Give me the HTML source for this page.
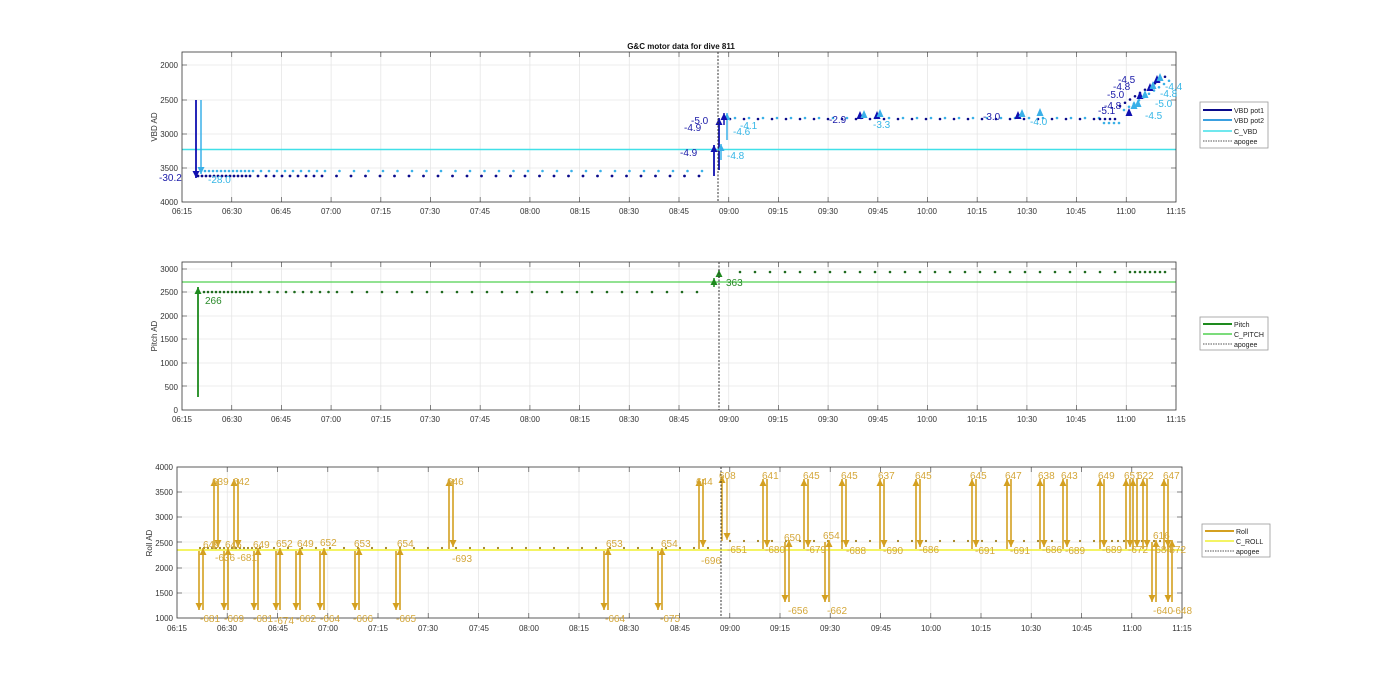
<!DOCTYPE html>
<html><head><meta charset="utf-8"><style>
html,body{margin:0;padding:0;background:#fff;width:1400px;height:693px;overflow:hidden}
svg{display:block;font-family:"Liberation Sans",Arial,sans-serif}
.t{font-size:8px;fill:#333}
</style></head><body>
<svg id="s" width="1400" height="693" viewBox="0 0 1400 693">
<g id="g"></g>
<text x="681" y="49" font-size="8" font-weight="bold" fill="#111" text-anchor="middle">G&amp;C motor data for dive 811</text>
<g class="t" text-anchor="end">
<text x="178" y="68">2000</text><text x="178" y="103">2500</text><text x="178" y="137">3000</text><text x="178" y="171">3500</text><text x="178" y="205">4000</text>
<text x="178" y="272">3000</text><text x="178" y="295">2500</text><text x="178" y="319">2000</text><text x="178" y="342">1500</text><text x="178" y="366">1000</text><text x="178" y="390">500</text><text x="178" y="413">0</text>
<text x="173" y="470">4000</text><text x="173" y="495">3500</text><text x="173" y="520">3000</text><text x="173" y="546">2500</text><text x="173" y="571">2000</text><text x="173" y="596">1500</text><text x="173" y="621">1000</text>
</g>
<g class="t" text-anchor="middle">
<text transform="translate(157,127) rotate(-90)">VBD AD</text>
<text transform="translate(157,336) rotate(-90)">Pitch AD</text>
<text transform="translate(152,543) rotate(-90)">Roll AD</text>
</g>
<g class="t" text-anchor="middle">
<text x="182" y="214">06:15</text><text x="232" y="214">06:30</text><text x="281" y="214">06:45</text><text x="331" y="214">07:00</text><text x="381" y="214">07:15</text><text x="430" y="214">07:30</text><text x="480" y="214">07:45</text><text x="530" y="214">08:00</text><text x="580" y="214">08:15</text><text x="629" y="214">08:30</text><text x="679" y="214">08:45</text><text x="729" y="214">09:00</text><text x="778" y="214">09:15</text><text x="828" y="214">09:30</text><text x="878" y="214">09:45</text><text x="927" y="214">10:00</text><text x="977" y="214">10:15</text><text x="1027" y="214">10:30</text><text x="1076" y="214">10:45</text><text x="1126" y="214">11:00</text><text x="1176" y="214">11:15</text>
</g>
<g class="t" text-anchor="middle">
<text x="182" y="422">06:15</text><text x="232" y="422">06:30</text><text x="281" y="422">06:45</text><text x="331" y="422">07:00</text><text x="381" y="422">07:15</text><text x="430" y="422">07:30</text><text x="480" y="422">07:45</text><text x="530" y="422">08:00</text><text x="580" y="422">08:15</text><text x="629" y="422">08:30</text><text x="679" y="422">08:45</text><text x="729" y="422">09:00</text><text x="778" y="422">09:15</text><text x="828" y="422">09:30</text><text x="878" y="422">09:45</text><text x="927" y="422">10:00</text><text x="977" y="422">10:15</text><text x="1027" y="422">10:30</text><text x="1076" y="422">10:45</text><text x="1126" y="422">11:00</text><text x="1176" y="422">11:15</text>
</g>
<g class="t" text-anchor="middle">
<text x="177" y="631">06:15</text><text x="227" y="631">06:30</text><text x="278" y="631">06:45</text><text x="328" y="631">07:00</text><text x="378" y="631">07:15</text><text x="428" y="631">07:30</text><text x="479" y="631">07:45</text><text x="529" y="631">08:00</text><text x="579" y="631">08:15</text><text x="629" y="631">08:30</text><text x="680" y="631">08:45</text><text x="730" y="631">09:00</text><text x="780" y="631">09:15</text><text x="830" y="631">09:30</text><text x="881" y="631">09:45</text><text x="931" y="631">10:00</text><text x="981" y="631">10:15</text><text x="1031" y="631">10:30</text><text x="1082" y="631">10:45</text><text x="1132" y="631">11:00</text><text x="1182" y="631">11:15</text>
</g>
<g font-size="10">
<text x="159" y="181" fill="#1a1aa8">-30.2</text><text x="208" y="183" fill="#35b6e6">-28.0</text>
<text x="691" y="124" fill="#1a1aa8">-5.0</text><text x="684" y="131" fill="#1a1aa8">-4.9</text><text x="680" y="156" fill="#1a1aa8">-4.9</text>
<text x="727" y="159" fill="#35b6e6">-4.8</text><text x="733" y="135" fill="#35b6e6">-4.6</text><text x="740" y="129" fill="#35b6e6">-4.1</text>
<text x="829" y="123" fill="#1a1aa8">-2.9</text><text x="873" y="128" fill="#35b6e6">-3.3</text><text x="983" y="120" fill="#1a1aa8">-3.0</text><text x="1030" y="125" fill="#35b6e6">-4.0</text>
<text x="1098" y="114" fill="#1a1aa8">-5.1</text><text x="1104" y="109" fill="#1a1aa8">-4.8</text><text x="1107" y="98" fill="#1a1aa8">-5.0</text><text x="1113" y="90" fill="#1a1aa8">-4.8</text><text x="1118" y="83" fill="#1a1aa8">-4.5</text>
<text x="1145" y="119" fill="#35b6e6">-4.5</text><text x="1155" y="107" fill="#35b6e6">-5.0</text><text x="1160" y="97" fill="#35b6e6">-4.8</text><text x="1165" y="90" fill="#35b6e6">-4.4</text>
</g>
<g font-size="10" fill="#2a8a2a"><text x="205" y="304">266</text><text x="726" y="286">363</text></g>
<g font-size="10" fill="#d4a73a" id="ra"></g>
<g font-size="7" fill="#222">
<rect x="1200" y="102" width="68" height="46" fill="#fff" stroke="#999" stroke-width="0.8"/>
<line x1="1203" y1="110" x2="1232" y2="110" stroke="#0a0a8a" stroke-width="2"/><text x="1234" y="113">VBD pot1</text>
<line x1="1203" y1="120" x2="1232" y2="120" stroke="#3aa0e0" stroke-width="2"/><text x="1234" y="123">VBD pot2</text>
<line x1="1203" y1="131" x2="1232" y2="131" stroke="#40e0e8" stroke-width="1.5"/><text x="1234" y="134">C_VBD</text>
<line x1="1203" y1="141" x2="1232" y2="141" stroke="#555" stroke-width="1" stroke-dasharray="1.5,1"/><text x="1234" y="144">apogee</text>
<rect x="1200" y="317" width="68" height="33" fill="#fff" stroke="#999" stroke-width="0.8"/>
<line x1="1203" y1="324" x2="1232" y2="324" stroke="#1e8a1e" stroke-width="2"/><text x="1234" y="327">Pitch</text>
<line x1="1203" y1="334" x2="1232" y2="334" stroke="#50d050" stroke-width="1.5"/><text x="1234" y="337">C_PITCH</text>
<line x1="1203" y1="344" x2="1232" y2="344" stroke="#555" stroke-width="1" stroke-dasharray="1.5,1"/><text x="1234" y="347">apogee</text>
<rect x="1202" y="524" width="68" height="33" fill="#fff" stroke="#999" stroke-width="0.8"/>
<line x1="1205" y1="531" x2="1234" y2="531" stroke="#d4a020" stroke-width="2"/><text x="1236" y="534">Roll</text>
<line x1="1205" y1="541" x2="1234" y2="541" stroke="#f0f030" stroke-width="1.5"/><text x="1236" y="544">C_ROLL</text>
<line x1="1205" y1="551" x2="1234" y2="551" stroke="#555" stroke-width="1" stroke-dasharray="1.5,1"/><text x="1236" y="554">apogee</text>
</g>
</svg>
<script>
(function(){
var g=document.getElementById('g'),h='';
function L(x1,y1,x2,y2,c,w,d){h+='<line x1="'+x1+'" y1="'+y1+'" x2="'+x2+'" y2="'+y2+'" stroke="'+c+'" stroke-width="'+(w||1)+'"'+(d?' stroke-dasharray="'+d+'"':'')+'/>';}
function D(x,y,c,r){h+='<circle cx="'+x+'" cy="'+y+'" r="'+(r||1.4)+'" fill="'+c+'"/>';}
function A(x,y1,y2,c,w){L(x,y1,x,y2,c,w||1.5);var dir=y2<y1?1:-1;h+='<polygon points="'+(x-3.5)+','+(y2+dir*7)+' '+(x+3.5)+','+(y2+dir*7)+' '+x+','+y2+'" fill="'+c+'"/>';}
function axes(l,r,t,b,step){
 h+='<rect x="'+l+'" y="'+t+'" width="'+(r-l)+'" height="'+(b-t)+'" fill="#fff"/>';
 for(var i=1;i<20;i++){var x=l+i*(r-l)/20;L(x,t,x,b,'#e6e6e6',0.8);L(x,b,x,b-5,'#666',0.8);L(x,t,x,t+5,'#666',0.8);}
 for(var j=0;j<step.length;j++){L(l,step[j],r,step[j],'#e6e6e6',0.8);L(l,step[j],l+5,step[j],'#666',.8);L(r,step[j],r-5,step[j],'#666',.8);}
}
axes(182,1176,52,202,[65,100,134,168]);
axes(182,1176,262,410,[269,292,316,339,363,386]);
axes(177,1182,467,618,[492,517,542,568,593]);
L(182,149.5,1176,149.5,'#40e0e8',1.5);
var x;
for(x=198;x<712;x+=(x<250?4:(x<320?8:14.5))){D(x,176,'#0a0a8a',1.4);D(x+3,171,'#3ab0e8',1.3);}
for(x=730;x<1098;x+=14){D(x,119,'#0a0a8a',1.3);D(x+5,118,'#3ab0e8',1.3);}
for(x=1100;x<1170;x+=5){var y=119-(x-1100)*0.65;if(x<1118)y=119;D(x,Math.max(y,76),'#0a0a8a',1.3);D(x+4,Math.max(y+4,76),'#3ab0e8',1.3);}
A(196,100,178,'#1010b0',1.8);A(201,100,174,'#3ab0e8',1.5);
A(714,176,145,'#1010b0',1.8);A(719,170,118,'#1010b0',1.8);A(721,160,144,'#3ab0e8',1.5);A(727,140,113,'#3ab0e8',1.5);A(724,125,113,'#1010b0',1.5);
[[860,116,'#1010b0'],[864,115,'#3ab0e8'],[877,116,'#1010b0'],[880,114,'#3ab0e8'],[1018,116,'#1010b0'],[1022,114,'#3ab0e8'],[1040,113,'#3ab0e8'],[1129,113,'#1010b0'],[1134,106,'#3ab0e8'],[1138,104,'#3ab0e8'],[1140,96,'#1010b0'],[1145,95,'#3ab0e8'],[1150,88,'#1010b0'],[1153,86,'#3ab0e8'],[1157,80,'#1010b0'],[1160,78,'#3ab0e8']].forEach(function(p){h+='<polygon points="'+(p[0]-3.5)+','+(p[1]+3)+' '+(p[0]+3.5)+','+(p[1]+3)+' '+p[0]+','+(p[1]-5)+'" fill="'+p[2]+'"/>';});
L(718,52,718,202,'#333',1,'2,1.5');
L(182,282,1176,282,'#50d050',1.2);
for(x=204;x<712;x+=(x<250?4:(x<330?8.5:15)))D(x,292,'#1e6a1e',1.3);
for(x=740;x<1168;x+=(x<1120?15:5))D(x,272,'#1e6a1e',1.3);
A(198,397,287,'#1e8a1e',1.8);A(714,287,278,'#1e8a1e',1.5);A(719,278,270,'#1e8a1e',1.5);
L(719,262,719,410,'#333',1,'2,1.5');
L(177,550,1182,550,'#f0f030',1.6);
for(x=200;x<715;x+=(x<260?4:14))D(x,548,'#a08020',1.1);
for(x=730;x<1170;x+=(x<1090?14:6))D(x,541,'#a08020',1.1);
var C='#d4a020';
[199,224,254,276,296,320,355,396,604,658].forEach(function(x){A(x,551,610,C,1.6);A(x+4,610,548,C,1.6);});
[785,825].forEach(function(x){A(x,542,602,C,1.6);A(x+4,602,540,C,1.6);});
[1152,1168].forEach(function(x){A(x,542,602,C,1.6);A(x+4,602,540,C,1.6);});
[214,234,449,699,763,804,842,880,916,972,1007,1040,1063,1100,1126,1133,1143,1164].forEach(function(x){A(x,549,479,C,1.6);A(x+4,479,547,C,1.6);});
A(722,541,476,C,1.5);A(727,478,540,C,1.2);
L(721,467,721,618,'#333',1,'2,1.5');
var lab=[[203,548,'649'],[225,548,'646'],[253,548,'649'],[276,547,'652'],[297,547,'649'],[320,546,'652'],[354,547,'653'],[397,547,'654'],[606,547,'653'],[661,547,'654'],[212,485,'639'],[233,485,'642'],[447,485,'646'],[696,485,'644'],[719,479,'608'],[762,479,'641'],[803,479,'645'],[841,479,'645'],[878,479,'637'],[915,479,'645'],[970,479,'645'],[1005,479,'647'],[1038,479,'638'],[1061,479,'643'],[1098,479,'649'],[1124,479,'651'],[1137,479,'622'],[1163,479,'647'],[784,541,'650'],[823,539,'654'],[1153,539,'616'],
[200,622,'-681'],[224,622,'-669'],[253,622,'-681'],[274,624,'-674'],[296,622,'-662'],[320,622,'-664'],[353,622,'-666'],[396,622,'-665'],[605,622,'-664'],[660,622,'-675'],[215,561,'-636'],[237,561,'-681'],[452,562,'-693'],[701,564,'-696'],[727,553,'-651'],[765,553,'-680'],[806,553,'-679'],[846,554,'-688'],[883,554,'-690'],[919,553,'-686'],[975,554,'-691'],[1010,554,'-691'],[1042,553,'-686'],[1065,554,'-689'],[1102,553,'-689'],[1128,553,'-672'],[1152,553,'-684'],[1166,553,'-672'],[788,614,'-656'],[827,614,'-662'],[1153,614,'-640'],[1172,614,'-648']];
var s='';lab.forEach(function(p){s+='<text x="'+p[0]+'" y="'+p[1]+'">'+p[2]+'</text>';});
document.getElementById('ra').innerHTML=s;
[[182,52,994,150],[182,262,994,148],[177,467,1005,151]].forEach(function(b){h+='<rect x="'+b[0]+'" y="'+b[1]+'" width="'+b[2]+'" height="'+b[3]+'" fill="none" stroke="#333" stroke-width="0.8"/>';});
g.innerHTML=h;
})();
</script>
</body></html>
